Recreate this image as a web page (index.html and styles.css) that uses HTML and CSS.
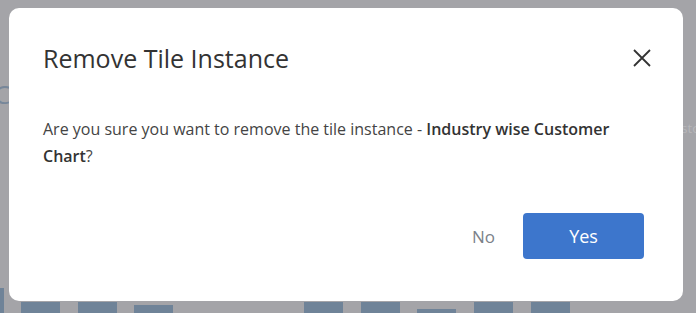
FILE: index.html
```html
<!DOCTYPE html>
<html lang="en">
<head>
  <meta charset="UTF-8">
  <meta name="viewport" content="width=device-width, initial-scale=1.0">
  <title>Remove Tile Instance</title>
  <link rel="stylesheet" href="styles.css">
</head>
<body>
  <!-- Dashboard behind the overlay -->
  <div class="dashboard">
    <div class="tile-head">
      <span class="tile-letter">C</span>
      <span class="tile-legend">sto</span>
    </div>
    <div class="chart">
      <div class="bar edge"></div>
      <div class="bar"></div>
      <div class="bar"></div>
      <div class="bar low"></div>
      <div class="bar gap"></div>
      <div class="bar"></div>
      <div class="bar lower"></div>
      <div class="bar"></div>
      <div class="bar"></div>
    </div>
  </div>

  <!-- Confirm dialog -->
  <div class="overlay">
    <div class="dialog">
      <div class="dialog-header">
        <h2>Remove Tile Instance</h2>
        <button class="close" aria-label="Close">
          <svg width="20" height="20" viewBox="0 0 20 20">
            <path d="M2 2 L18 18 M18 2 L2 18" stroke="#333" stroke-width="1.8" fill="none"/>
          </svg>
        </button>
      </div>
      <p class="dialog-body">Are you sure you want to remove the tile instance - <strong>Industry wise Customer Chart</strong>?</p>
      <div class="dialog-footer">
        <button class="btn-no">No</button>
        <button class="btn-yes">Yes</button>
      </div>
    </div>
  </div>
</body>
</html>
```

FILE: styles.css
```css
body {
  font-family: "Open Sans", Arial, sans-serif;
  margin: 0;
  padding: 0;
  width: 696px;
  height: 313px;
  overflow: hidden;
  background-color: #a4a4a8;
  position: relative;
}
.dashboard {
  height: 313px;
  display: flex;
  flex-direction: column;
  justify-content: space-between;
}
.tile-head {
  display: flex;
  justify-content: space-between;
  padding-top: 76px;
  color: #77879a;
}
.tile-letter {
  font-size: 26px;
  margin-left: -6px;
}
.tile-legend {
  font-size: 13px;
  margin-top: 43px;
  margin-right: -4px;
  color: #b7b7ba;
}
.chart {
  display: flex;
  align-items: flex-end;
  gap: 17.7px;
  padding-left: 21px;
  height: 11px;
}
.bar {
  width: 39px;
  height: 11px;
  background: #6f8398;
}
.bar.edge {
  width: 4px;
  height: 25px;
  margin-left: -21px;
  margin-right: -0.7px;
}
.bar.low {
  height: 8px;
}
.bar.gap {
  margin-left: 113px;
}
.bar.lower {
  height: 4px;
}
.overlay {
  position: absolute;
  top: 8px;
  left: 9px;
}
.dialog {
  width: 674px;
  height: 293px;
  box-sizing: border-box;
  background: #fff;
  border-radius: 10px;
  padding: 0 34px 0 34px;
  display: flex;
  flex-direction: column;
}
.dialog-header {
  display: flex;
  justify-content: space-between;
  align-items: center;
  height: 100px;
}
.dialog-header h2 {
  margin: 0;
  font-size: 25px;
  font-weight: normal;
  color: #333;
}
.close {
  background: none;
  border: none;
  padding: 0;
  margin-right: -3px;
  cursor: pointer;
  display: flex;
}
.dialog-body {
  margin: 8px 0 0;
  font-size: 16px;
  line-height: 27px;
  color: #444;
}
.dialog-body strong {
  font-weight: 600;
  color: #333;
}
.dialog-footer {
  display: flex;
  justify-content: flex-end;
  align-items: center;
  gap: 28px;
  margin-top: 43px;
  margin-right: 5px;
}
.btn-no {
  background: none;
  border: none;
  font-family: inherit;
  font-size: 17px;
  color: #7b8189;
  cursor: pointer;
  padding: 0;
}
.btn-yes {
  width: 121px;
  height: 46px;
  background: #3d76cc;
  color: white;
  border: none;
  border-radius: 4px;
  font-family: inherit;
  font-size: 18px;
  cursor: pointer;
}
```
